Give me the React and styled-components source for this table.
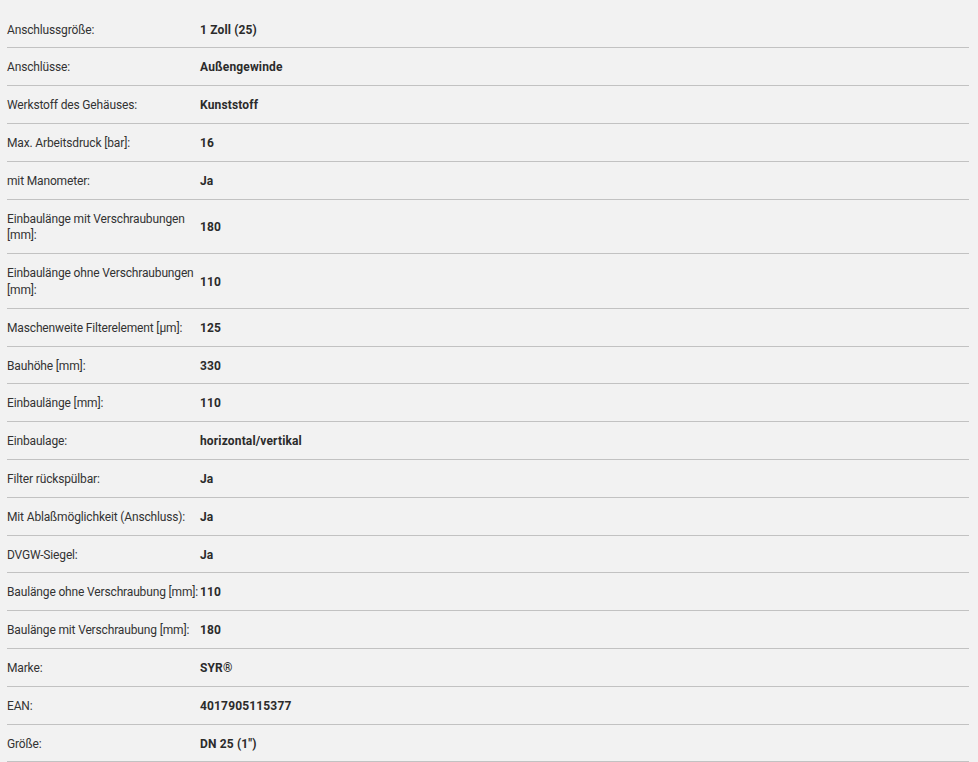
import React from 'react';
import styled, { createGlobalStyle } from 'styled-components';

const GlobalStyle = createGlobalStyle`
  html, body {
    margin: 0;
    padding: 0;
    background: #f2f2f2;
  }
  body {
    font-family: Roboto, "Liberation Sans", Arial, sans-serif;
    color: #333;
  }
`;

const Wrapper = styled.div`
  padding: 10.6px 9px 0 7px;
`;

const Table = styled.div`
  display: flex;
  flex-direction: column;
`;

const Row = styled.div`
  display: grid;
  grid-template-columns: 193px 1fr;
  align-items: center;
  border-bottom: 1px solid #c2c2c2;
  font-size: 12px;
  line-height: 1.4;
  padding: 11px 0 9px;
`;

const Label = styled.div`
  color: #333;
  letter-spacing: -0.15px;
`;

const Value = styled.div`
  font-weight: 700;
  color: #2b2b2b;
  letter-spacing: 0.15px;
`;

const specs = [
  ['Anschlussgröße:', '1 Zoll (25)'],
  ['Anschlüsse:', 'Außengewinde'],
  ['Werkstoff des Gehäuses:', 'Kunststoff'],
  ['Max. Arbeitsdruck [bar]:', '16'],
  ['mit Manometer:', 'Ja'],
  ['Einbaulänge mit Verschraubungen [mm]:', '180'],
  ['Einbaulänge ohne Verschraubungen [mm]:', '110'],
  ['Maschenweite Filterelement [µm]:', '125'],
  ['Bauhöhe [mm]:', '330'],
  ['Einbaulänge [mm]:', '110'],
  ['Einbaulage:', 'horizontal/vertikal'],
  ['Filter rückspülbar:', 'Ja'],
  ['Mit Ablaßmöglichkeit (Anschluss):', 'Ja'],
  ['DVGW-Siegel:', 'Ja'],
  ['Baulänge ohne Verschraubung [mm]:', '110'],
  ['Baulänge mit Verschraubung [mm]:', '180'],
  ['Marke:', 'SYR®'],
  ['EAN:', '4017905115377'],
  ['Größe:', 'DN 25 (1")'],
];

const App = () => (
  <>
    <GlobalStyle />
    <Wrapper>
      <Table>
        {specs.map(([label, value]) => (
          <Row key={label}>
            <Label>{label}</Label>
            <Value>{value}</Value>
          </Row>
        ))}
      </Table>
    </Wrapper>
  </>
);

export default App;
